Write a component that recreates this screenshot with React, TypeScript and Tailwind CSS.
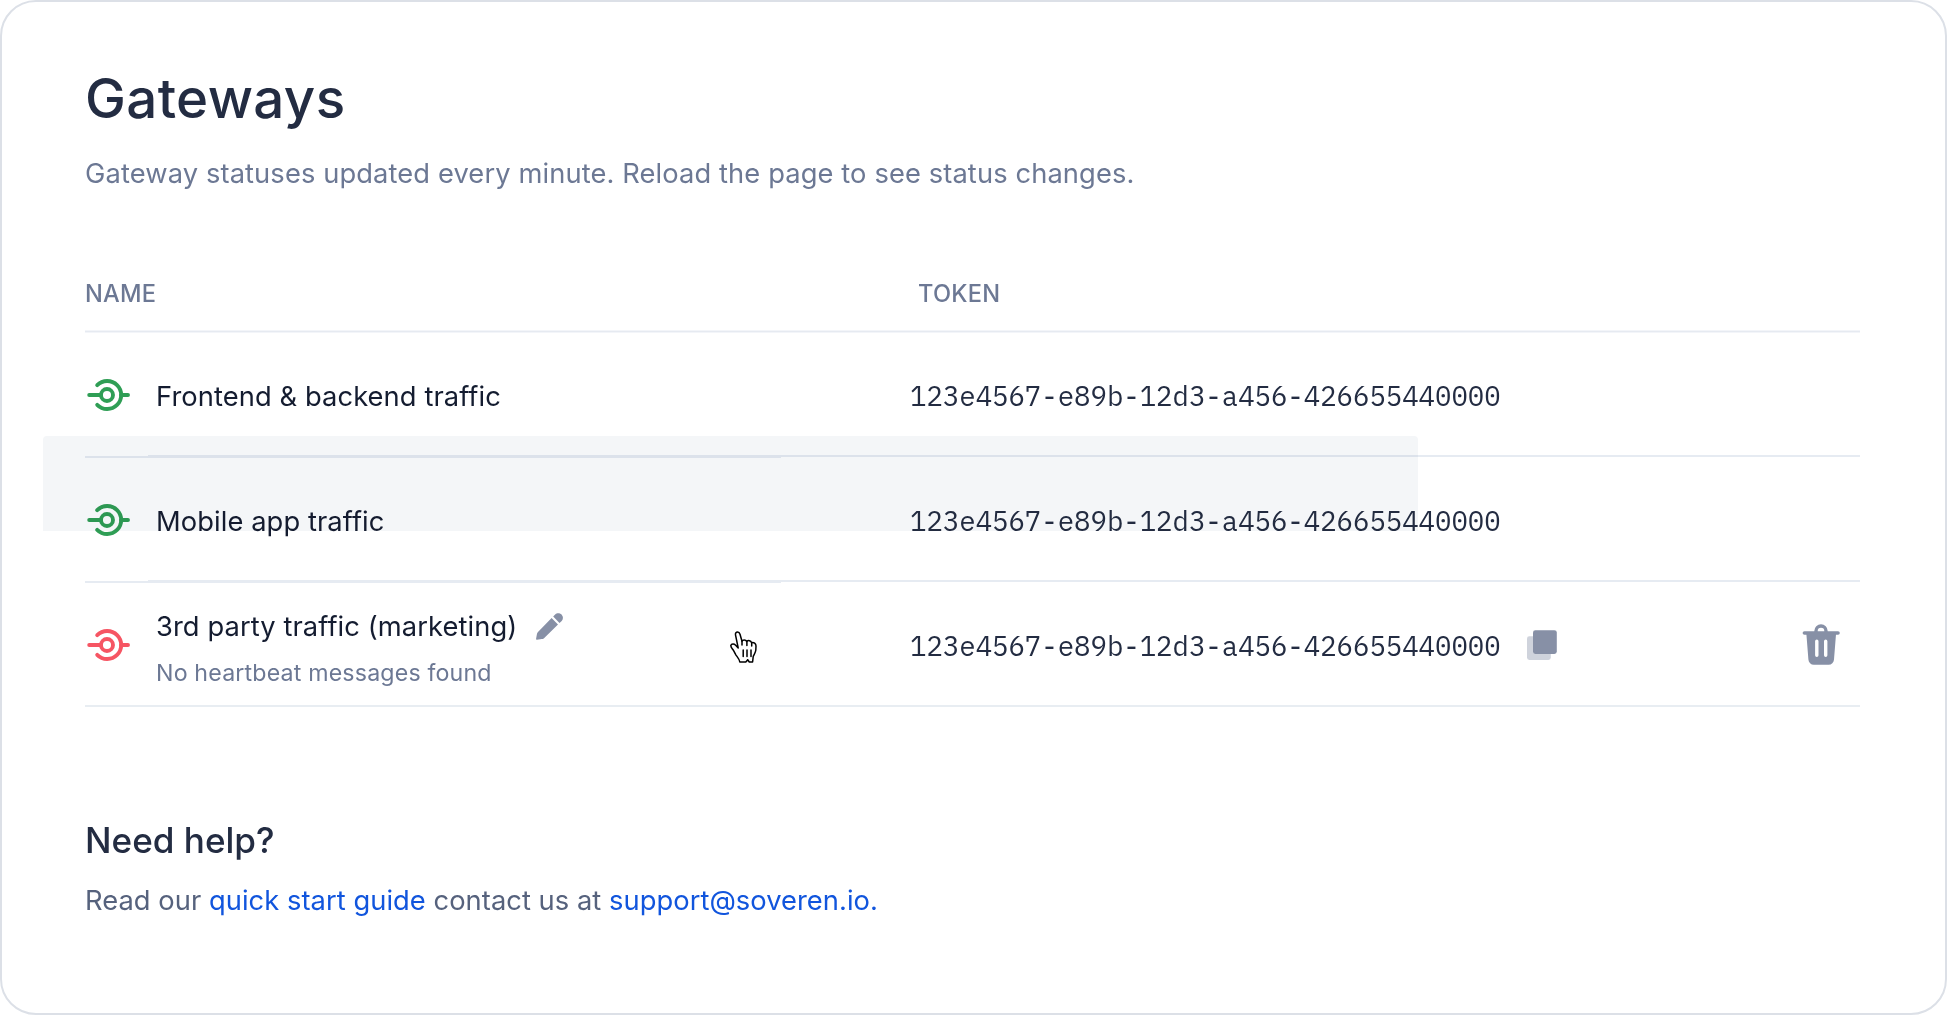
import React from "react";

function GatewayIcon({ className }: { className: string }) {
  return (
    <svg viewBox="0 0 44 32" className={"ml-px h-8 w-11 " + className} fill="none" stroke="currentColor" strokeWidth="3.9" strokeLinecap="round">
      <path d="M11.2 6.2A14 14 0 1 1 11.2 25.8" />
      <circle cx="21" cy="16" r="6" />
      <path d="M3.2 16H15M35 16H42" />
    </svg>
  );
}

function PencilIcon() {
  return (
    <svg viewBox="0 0 27 27" className="h-[27px] w-[27px] text-[#8790a6]" fill="currentColor">
      <path d="M15.6 5 22 11.4 8 25.2C7.4 25.8 6.6 26 5.8 26.1L.9 26.8C.3 26.9-.1 26.4.1 25.8L.9 21.2C1 20.4 1.4 19.6 2 19Z" />
      <path d="M17.2 3.5 18.9 1.7C21-.4 24.2 0 25.7 1.7 27.3 3.3 27.4 6 25.7 7.9L23.5 9.9Z" />
    </svg>
  );
}

function CopyIcon() {
  return (
    <svg viewBox="0 0 30 30" className="h-[30px] w-[30px]">
      <rect x="0" y="6.2" width="23.8" height="23.8" rx="2.4" fill="#cfd3dc" />
      <rect x="6" y="0.2" width="23.8" height="23.8" rx="2.4" fill="#8790a6" />
    </svg>
  );
}

function TrashIcon() {
  return (
    <svg viewBox="0 0 38 41" className="h-[41px] w-[38px] text-[#8790a6]">
      <path d="M14 8V7a5 5 0 0 1 10 0v1" fill="none" stroke="currentColor" strokeWidth="3.4" />
      <rect x=".6" y="7.2" width="37.2" height="3.6" rx="1.8" fill="currentColor" />
      <path
        fillRule="evenodd"
        fill="currentColor"
        d="M4.3 9H34.1L32 35.5A5.5 5.5 0 0 1 26.6 40.7H11.8A5.5 5.5 0 0 1 6.4 35.5ZM13.1 17.2V31.3A1.7 1.7 0 0 0 16.5 31.3V17.2A1.7 1.7 0 0 0 13.1 17.2ZM22 17.2V31.3A1.7 1.7 0 0 0 25.4 31.3V17.2A1.7 1.7 0 0 0 22 17.2Z"
      />
    </svg>
  );
}

function HandCursor() {
  return (
    <svg viewBox="0 0 28 33" className="h-[33px] w-7" fill="#fff" stroke="#000" strokeWidth="1.5" strokeLinejoin="round" strokeLinecap="round">
      <path d="M5.5 3.8C5.2 2.1 6.2 1 7.6 1 8.8 1 9.6 1.8 10 3.2L12 10.2C12.6 8.7 15.6 8.5 16.8 10.5 18.3 8.9 20.8 9.6 21.6 11.7 23.8 10.9 26 12.6 26 15L25.8 19.3C25.6 21.5 24 23.5 23.2 25.6L22.6 31H19.3L17.7 28.7 15.8 31H9.8C9.5 28.2 7.3 26 6 24.1L3.6 19.6C2.6 18 .8 16.5.8 14.5 1.5 12.4 4.2 12.6 5.4 14L8.2 17Z" />
      <path d="M12 10.5V14M16.9 10.8V14.4M21.7 12V15M13.2 19V25.5M17 19V25.5M21 19V25.5" />
    </svg>
  );
}

function Divider() {
  return (
    <div className="flex h-[3px]">
      <div className="mt-px h-0.5 w-[63px] bg-[#e6ebf2]" />
      <div className="h-[3px] w-[633px] bg-[#e6ebf2]" />
      <div className="h-0.5 flex-1 bg-[#e6ebf2]" />
    </div>
  );
}

const TOKEN = "123e4567-e89b-12d3-a456-426655440000";

function Row({ name, ok, note }: { name: string; ok?: boolean; note?: string }) {
  return (
    <div className="flex h-[122px] items-center pt-0.5">
      <div className="relative flex w-[825px] items-center">
        <GatewayIcon className={ok ? "text-[#2f9e55]" : "text-[#f65563]"} />
        <div className={note ? "ml-[26px] flex flex-col pt-2" : "ml-[26px] flex flex-col pt-0.5"}>
          <div className="flex h-9 items-center">
            <span className="pt-0.5 text-[27.3px] tracking-[0.09px] text-[#141c30]">{name}</span>
            {note && <span className="ml-[19px]"><PencilIcon /></span>}
          </div>
          {note && <div className="mt-2.5 h-9 text-[23.2px] leading-[38px] tracking-[0.16px] text-[#6c7894]">{note}</div>}
        </div>
        {note && <div className="absolute top-[31px] left-[645px]"><HandCursor /></div>}
      </div>
      <div className="flex flex-1 items-center">
        <span className="pt-1 font-['IBM_Plex_Mono','Liberation_Mono',monospace] text-[27.35px] text-[#232c42]">{TOKEN}</span>
        {note && <span className="ml-[26px]"><CopyIcon /></span>}
      </div>
      {note && <div className="mr-[20px] pb-px"><TrashIcon /></div>}
    </div>
  );
}

export default function App() {
  return (
    <main className="relative flex h-[1015px] w-full flex-col rounded-[36px] border-2 border-[#dce0e7] bg-white pr-[85px] pl-[83px] font-['Inter',sans-serif]">
      <h1 className="mt-[64px] h-16 text-[54.7px] leading-[64px] font-medium tracking-[0.35px] text-[#232c42]">Gateways</h1>
      <p className="mt-[24px] h-10 text-[27.3px] leading-10 tracking-[0.11px] text-[#6c7894]">
        Gateway statuses updated every minute. Reload the page to see status changes.
      </p>
      <section className="flex flex-col">
        <div className="mt-20 flex h-14 text-[23.6px] leading-10 font-medium tracking-[0.25px] text-[#6c7894]">
          <span className="w-[833px]">NAME</span>
          <span>TOKEN</span>
        </div>
        <div className="h-[3px] border-y border-[#f3f5f9] bg-[#e6eaf1]" />
        <Row name="Frontend & backend traffic" ok />
        <Divider />
        <Row name="Mobile app traffic" ok />
        <Divider />
        <Row name="3rd party traffic (marketing)" note="No heartbeat messages found" />
        <div className="h-0.5 bg-[#e8edf2]" />
      </section>
      <h2 className="mt-[113px] h-10 text-[35.1px] leading-10 font-medium text-[#232c42]">Need help?</h2>
      <p className="mt-[21px] h-10 text-[27.3px] leading-10 tracking-[0.05px] text-[#56627d]">
        Read our <a className="text-[#1155dd]">quick start guide</a> contact us at <a className="text-[#1155dd]">support@soveren.io.</a>
      </p>
      <div className="pointer-events-none absolute top-[434px] left-[41px] h-[95px] w-[1375px] rounded-t-[4px] bg-[#f4f6f8] mix-blend-multiply" />
    </main>
  );
}
